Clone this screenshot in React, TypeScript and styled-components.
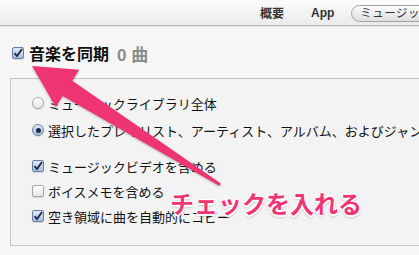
import React from 'react';
import styled, { createGlobalStyle } from 'styled-components';

const GlobalStyle = createGlobalStyle`
  html, body {
    margin: 0;
    padding: 0;
    background: #f6f6f6;
  }
  body {
    font-family: "Liberation Sans", "Noto Sans CJK JP", sans-serif;
    color: #111;
  }
`;

const Page = styled.div`
  position: relative;
  width: 419px;
  height: 255px;
  overflow: hidden;
  background: #f6f6f6;
`;

const TopBar = styled.div`
  height: 25px;
  display: flex;
  align-items: center;
  padding-left: 260px;
  background: linear-gradient(#fbfbfb, #ebebeb);
  border-bottom: 1px solid #b7b7b7;
  box-shadow: 0 1px 0 #e2e2e2;
`;

const Tab = styled.span<{ $gap: number }>`
  font-size: 12px;
  font-weight: bold;
  color: #333;
  margin-right: ${(p) => p.$gap}px;
  white-space: nowrap;
`;

const PillTab = styled.span`
  flex-shrink: 0;
  width: 110px;
  height: 15px;
  margin-top: 1px;
  padding-left: 8px;
  border: 1px solid #a3a3a3;
  border-radius: 9px;
  background: linear-gradient(#fdfdfd, #dedede);
  font-size: 11.5px;
  line-height: 15px;
  color: #333;
  white-space: nowrap;
  overflow: hidden;
  letter-spacing: 0.5px;
`;

const SyncRow = styled.div`
  display: flex;
  align-items: center;
  height: 20px;
  margin-top: 17px;
  padding-left: 12px;
`;

const Title = styled.span`
  font-family: "Noto Sans CJK JP", sans-serif;
  font-size: 16px;
  font-weight: bold;
  margin-left: 5px;
  color: #111;
`;

const Count = styled.span`
  font-size: 17px;
  font-weight: bold;
  color: #8c8c8c;
  margin-left: 8px;
  font-family: "Liberation Sans", "Noto Sans CJK JP", sans-serif;
`;

const Panel = styled.div`
  margin: 15px 0 0 10px;
  width: 440px;
  height: 168px;
  border: 1px solid #c4c4c4;
  background: #f3f3f3;
  padding: 14px 0 0 21px;
  box-sizing: border-box;
`;

const Group = styled.div<{ $gap: number; $top: number }>`
  display: flex;
  flex-direction: column;
  gap: ${(p) => p.$gap}px;
  margin-top: ${(p) => p.$top}px;
`;

const Row = styled.div`
  display: flex;
  align-items: center;
  height: 20px;
  white-space: nowrap;
`;

const Label = styled.span`
  font-family: "Noto Sans CJK JP", sans-serif;
  font-size: 13px;
  margin-left: 4px;
  color: #111;
`;

const Box = styled.span<{ $on: boolean }>`
  flex-shrink: 0;
  width: 12px;
  height: 12px;
  box-sizing: border-box;
  border-radius: 2px;
  border: 1px solid ${(p) => (p.$on ? '#6a7fa8' : '#a5a5a5')};
  background: ${(p) =>
    p.$on ? 'linear-gradient(#e0e9f7, #a9bde0)' : 'linear-gradient(#ffffff, #e6e6e6)'};
  display: flex;
  align-items: center;
  justify-content: center;
  box-shadow: 0 1px 1px rgba(0, 0, 0, 0.12);
`;

const Round = styled(Box)`
  border-radius: 50%;
`;

const Dot = styled.span`
  width: 5px;
  height: 5px;
  border-radius: 50%;
  background: #1e2c48;
`;

const Annotation = styled.div`
  position: absolute;
  left: 170px;
  top: 191px;
  font-family: "Noto Sans CJK JP", sans-serif;
  font-size: 24px;
  font-weight: bold;
  line-height: 1;
  color: #ef3474;
  white-space: nowrap;
  text-shadow: -1px -1px 0 #fff, 1px -1px 0 #fff, -1px 1px 0 #fff, 1px 1px 0 #fff,
    0 2px 0 #fff, 0 2px 3px rgba(0, 0, 0, 0.35);
`;

const ArrowLayer = styled.svg`
  position: absolute;
  left: 0;
  top: 0;
  filter: drop-shadow(0 1px 1px rgba(0, 0, 0, 0.25));
`;

const Check: React.FC<{ on: boolean }> = ({ on }) => (
  <Box $on={on}>
    {on && (
      <svg width="10" height="10" viewBox="0 0 10 10">
        <path d="M1.5 5.2 L4 8 L9 1" fill="none" stroke="#1c2a44" strokeWidth="1.8" />
      </svg>
    )}
  </Box>
);

const Radio: React.FC<{ on: boolean }> = ({ on }) => <Round $on={on}>{on && <Dot />}</Round>;

const App: React.FC = () => {
  return (
    <Page>
      <GlobalStyle />
      <TopBar>
        <Tab $gap={27}>概要</Tab>
        <Tab $gap={17}>App</Tab>
        <PillTab>ミュージック</PillTab>
      </TopBar>

      <SyncRow>
        <Check on />
        <Title>音楽を同期</Title>
        <Count>0 曲</Count>
      </SyncRow>

      <Panel>
        <Group $gap={7} $top={0}>
          <Row>
            <Radio on={false} />
            <Label>ミュージックライブラリ全体</Label>
          </Row>
          <Row>
            <Radio on />
            <Label>選択したプレイリスト、アーティスト、アルバム、およびジャンル</Label>
          </Row>
        </Group>
        <Group $gap={5} $top={16}>
          <Row>
            <Check on />
            <Label>ミュージックビデオを含める</Label>
          </Row>
          <Row>
            <Check on={false} />
            <Label>ボイスメモを含める</Label>
          </Row>
          <Row>
            <Check on />
            <Label>空き領域に曲を自動的にコピー</Label>
          </Row>
        </Group>
      </Panel>

      <ArrowLayer width="419" height="255" viewBox="0 0 419 255">
        <polygon
          points="32,66 79.2,69.8 72.3,80.8 219.8,182.7 218.2,185.3 62.7,96 55.8,107"
          fill="#ef3474"
        />
        <circle cx="219" cy="184" r="1.5" fill="#ef3474" />
      </ArrowLayer>
      <Annotation>チェックを入れる</Annotation>
    </Page>
  );
};

export default App;
